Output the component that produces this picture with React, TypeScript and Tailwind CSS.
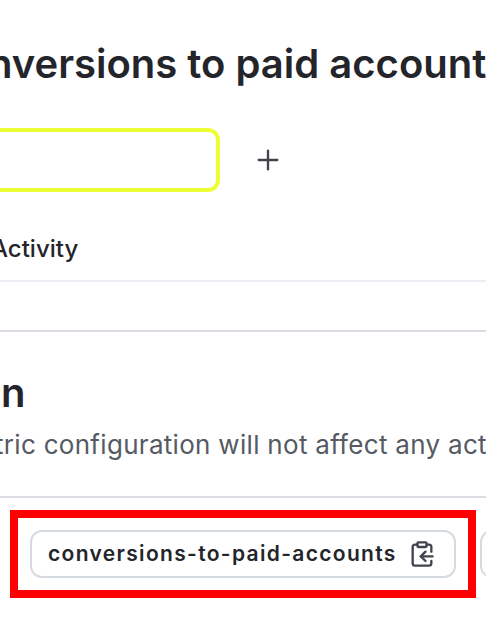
import { ClipboardCopy, Plus } from "lucide-react";

export default function App() {
  return (
    <div className="relative h-[618px] w-[486px] overflow-hidden bg-white font-['Inter',sans-serif]">
      <div className="flex justify-end whitespace-nowrap pt-[38px]">
        <h1 className="mr-[-22px] shrink-0 text-[40px] leading-[52px] font-semibold text-[#24252b]">
          Conversions to paid accounts
        </h1>
      </div>
      <div className="mt-[38px] flex items-center">
        <div className="ml-[-40px] h-[64px] w-[260px] rounded-[12px] border-[4px] border-[#ebff34] bg-white" />
        <Plus className="ml-[32px] h-[32px] w-[32px] text-[#40444d]" strokeWidth={1.75} />
      </div>
      <div className="mt-[37px] flex h-[51px] items-start overflow-hidden">
        <span className="ml-[-9px] whitespace-nowrap text-[24px] leading-[40px] font-medium text-[#24252b]">
          Activity
        </span>
      </div>
      <div className="h-[2px] bg-[#ebeef2]" />
      <div className="mt-[48px] h-[2px] bg-[#d9dce3]" />
      <div className="h-[164px] whitespace-nowrap pt-[35px]">
        <div className="ml-[1px] text-[40px] leading-[52px] font-semibold text-[#24252b]">n</div>
        <p className="ml-[-5px] mt-[8px] text-[26px] leading-[36px] tracking-[0.3px] text-[#555a63]">
          tric configuration will not affect any actions
        </p>
      </div>
      <div className="h-[2px] bg-[#d9dce3]" />
      <div className="mt-[32px] flex items-center gap-[24px] pl-[30px]">
        <div className="flex h-[48px] w-[426px] shrink-0 items-center justify-between rounded-[12px] border-2 border-[#d6dae1] bg-white pl-[16px] pr-[18px]">
          <span className="whitespace-nowrap text-[21px] font-semibold tracking-[1.33px] text-[#24252b]">
            conversions-to-paid-accounts
          </span>
          <ClipboardCopy className="h-[28px] w-[28px] text-[#40444d]" strokeWidth={2} />
        </div>
        <div className="h-[48px] w-[60px] shrink-0 rounded-[12px] border-2 border-[#d6dae1]" />
      </div>
      <div className="absolute left-[10px] top-[510px] h-[88px] w-[466px] border-[8px] border-[#ff0000]" />
    </div>
  );
}
